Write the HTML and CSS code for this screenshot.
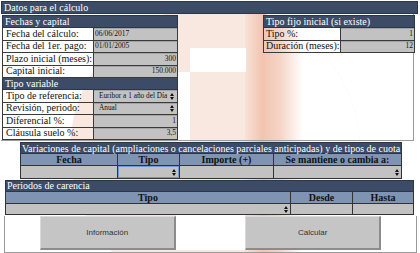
FILE: index.html
```html
<!DOCTYPE html>
<html lang="es">
<head>
<meta charset="utf-8">
<title>Datos para el cálculo</title>
<link rel="stylesheet" href="styles.css">
</head>
<body>
<svg class="watermark" width="420" height="253" viewBox="0 0 420 253" aria-hidden="true">
  <defs>
    <clipPath id="wm-clip"><circle cx="215" cy="150" r="145"/></clipPath>
    <linearGradient id="wm-band" x1="0" x2="1" y1="0" y2="0">
      <stop offset="0" stop-color="#f7e2d8"/>
      <stop offset="0.3" stop-color="#f2c4b0"/>
      <stop offset="0.6" stop-color="#f5d4c6"/>
      <stop offset="1" stop-color="#ffffff"/>
    </linearGradient>
  </defs>
  <g clip-path="url(#wm-clip)">
    <rect x="0" y="0" width="420" height="253" fill="#f8e8e0"/>
    <rect x="245" y="0" width="58" height="253" fill="url(#wm-band)"/>
    <rect x="303" y="0" width="120" height="253" fill="#fff"/>
    <rect x="190" y="48" width="56" height="24" fill="#fff"/>
    <rect x="176" y="72" width="14" height="70" fill="#fff"/>
    <rect x="176" y="213" width="69" height="37" fill="#fff"/>
  </g>
</svg>
<div class="page">
  <div class="title">Datos para el cálculo</div>
  <div class="top">
    <table class="form form-left">
      <colgroup><col class="lcol"><col></colgroup>
      <tr><th colspan="2">Fechas y capital</th></tr>
      <tr><td class="lbl">Fecha del cálculo:</td><td class="val">06/06/2017</td></tr>
      <tr><td class="lbl">Fecha del 1er. pago:</td><td class="val">01/01/2005</td></tr>
      <tr><td class="lbl">Plazo inicial (meses):</td><td class="val num">300</td></tr>
      <tr><td class="lbl">Capital inicial:</td><td class="val num">150.000</td></tr>
      <tr><th colspan="2">Tipo variable</th></tr>
      <tr><td class="lbl">Tipo de referencia:</td><td class="val"><div class="sel"><span>Euribor a 1 año del Día</span><svg class="arr" width="4" height="7" viewBox="0 0 4 7"><path d="M0 3 L2 0 L4 3 Z M0 4 L2 7 L4 4 Z" fill="#111"/></svg></div></td></tr>
      <tr><td class="lbl">Revisión, periodo:</td><td class="val"><div class="sel"><span>Anual</span><svg class="arr" width="4" height="7" viewBox="0 0 4 7"><path d="M0 3 L2 0 L4 3 Z M0 4 L2 7 L4 4 Z" fill="#111"/></svg></div></td></tr>
      <tr><td class="lbl">Diferencial %:</td><td class="val num">1</td></tr>
      <tr><td class="lbl">Cláusula suelo %:</td><td class="val num">3,5</td></tr>
    </table>
    <table class="form form-right">
      <colgroup><col class="lcol"><col></colgroup>
      <tr><th colspan="2">Tipo fijo inicial (si existe)</th></tr>
      <tr><td class="lbl">Tipo %:</td><td class="val num">1</td></tr>
      <tr><td class="lbl">Duración (meses):</td><td class="val num">12</td></tr>
    </table>
  </div>
  <table class="grid variaciones">
    <colgroup><col class="c-fecha"><col class="c-tipo"><col class="c-imp"><col></colgroup>
    <tr><th class="cap" colspan="4">Variaciones de capital (ampliaciones o cancelaciones parciales anticipadas) y de tipos de cuota</th></tr>
    <tr class="cols"><th>Fecha</th><th>Tipo</th><th>Importe (+)</th><th>Se mantiene o cambia a:</th></tr>
    <tr class="inputs">
      <td></td>
      <td><div class="sel focus"><span></span><svg class="arr" width="4" height="7" viewBox="0 0 4 7"><path d="M0 3 L2 0 L4 3 Z M0 4 L2 7 L4 4 Z" fill="#111"/></svg></div></td>
      <td></td>
      <td><div class="sel"><span></span><svg class="arr" width="4" height="7" viewBox="0 0 4 7"><path d="M0 3 L2 0 L4 3 Z M0 4 L2 7 L4 4 Z" fill="#111"/></svg></div></td>
    </tr>
  </table>
  <table class="grid carencia">
    <colgroup><col><col class="c-desde"><col class="c-hasta"></colgroup>
    <tr><th class="cap" colspan="3">Periodos de carencia</th></tr>
    <tr class="cols"><th>Tipo</th><th>Desde</th><th>Hasta</th></tr>
    <tr class="inputs">
      <td><div class="sel"><span></span><svg class="arr" width="4" height="7" viewBox="0 0 4 7"><path d="M0 3 L2 0 L4 3 Z M0 4 L2 7 L4 4 Z" fill="#111"/></svg></div></td>
      <td></td>
      <td></td>
    </tr>
  </table>
  <div class="buttons">
    <div class="btn-cell"><button class="btn" type="button">Información</button></div>
    <div class="btn-cell"><button class="btn" type="button">Calcular</button></div>
  </div>
</div>
</body>
</html>
```

FILE: styles.css
```css
html {
  margin: 0;
  padding: 0;
  background: #fff;
}
body {
  position: relative;
  z-index: 0;
  margin: 0;
  padding: 0;
  width: 420px;
  height: 253px;
  overflow: hidden;
  font-family: "Liberation Serif", "Times New Roman", serif;
  color: #111;
}
.watermark {
  position: absolute;
  left: 0;
  top: 0;
  z-index: -1;
}
.page {
  padding: 1px 0 0 1px;
}
.title {
  box-sizing: border-box;
  width: 417px;
  height: 13px;
  background: #3c4c67;
  border: 1px solid #2c3649;
  color: #fff;
  font-size: 10px;
  line-height: 11px;
  padding-left: 2px;
  white-space: nowrap;
}
.top {
  box-sizing: border-box;
  display: flex;
  align-items: flex-start;
  justify-content: space-between;
  width: 413px;
  height: 127px;
  padding: 1px 0 0 1px;
  border-right: 1px solid #9a9a9a;
  border-bottom: 1px solid #9a9a9a;
}
.form {
  border-collapse: collapse;
  table-layout: fixed;
  font-size: 10px;
}
.form tr {
  height: 12.4px;
}
.form th {
  background: #3c4c67;
  color: #fff;
  font-weight: normal;
  text-align: left;
  padding: 0 0 0 2px;
  border: 1px solid #2c3649;
  line-height: 10px;
  white-space: nowrap;
}
.form td {
  padding: 0;
  border: 1px solid #3a3a3a;
  line-height: 10px;
  white-space: nowrap;
  overflow: hidden;
}
.form .lbl {
  padding-left: 3px;
}
.form-right .lbl {
  padding-left: 2px;
}
.form .val {
  background: #c2c2c2;
  box-shadow: inset 0 1px 0 #a4a4a4;
  font-size: 7.5px;
  padding: 0 1px 0 1px;
}
.form .num {
  text-align: right;
}
.form-left {
  width: 176px;
}
.form-left .lcol {
  width: 91px;
}
.form-right {
  width: 152px;
  margin-right: -2px;
}
.form-right .lcol {
  width: 77px;
}
.sel {
  display: flex;
  align-items: center;
  justify-content: space-between;
  height: 100%;
  padding: 0 2px 0 4px;
  font-size: 7.3px;
  box-sizing: border-box;
}
.sel .arr {
  flex: none;
}
.sel.focus {
  border: 1px solid #6f98d6;
  height: 12px;
}
.grid {
  border-collapse: collapse;
  table-layout: fixed;
}
.grid th, .grid td {
  padding: 0;
  border: 1px solid #333;
}
.grid .cap {
  background: #3c4c67;
  color: #fff;
  font-weight: normal;
  text-align: left;
  font-size: 10px;
  line-height: 9px;
  white-space: nowrap;
  padding-left: 1px;
  border-color: #2c3649;
}
.grid .cols th {
  background: #7f94b2;
  color: #111;
  font-weight: bold;
  font-size: 10px;
  line-height: 10px;
  text-align: center;
  white-space: nowrap;
}
.grid .inputs td {
  background: #c2c2c2;
  padding: 0;
}
.variaciones {
  margin: 1px 0 0 19px;
  width: 382px;
}
.variaciones .cap {
  height: 10px;
}
.variaciones .cols th {
  height: 11px;
}
.variaciones .inputs td {
  height: 12px;
}
.variaciones .c-fecha { width: 97px; }
.variaciones .c-tipo { width: 62px; }
.variaciones .c-imp { width: 94px; }
.carencia {
  margin: 1px 0 0 4px;
  width: 409px;
}
.carencia .cap {
  height: 10px;
  line-height: 10px;
}
.carencia .cols th {
  height: 11px;
}
.carencia .inputs td {
  height: 10px;
}
.carencia .c-desde { width: 62px; }
.carencia .c-hasta { width: 61px; }
.buttons {
  box-sizing: border-box;
  display: grid;
  grid-template-columns: 1fr 1fr;
  width: 413px;
  height: 37px;
  margin: 1px 0 0 3px;
  border-left: 1px solid #9a9a9a;
  border-right: 1px solid #9a9a9a;
  border-bottom: 1px solid #9a9a9a;
}
.btn-cell {
  display: flex;
  justify-content: center;
  align-items: flex-start;
}
.btn {
  box-sizing: border-box;
  width: 136px;
  height: 34px;
  margin: 0;
  padding: 0;
  background: #c5c5c5;
  border-style: solid;
  border-width: 1px 2px 2px 1px;
  border-color: #dadada #8c8c8c #8c8c8c #dadada;
  font-family: "Liberation Sans", Arial, sans-serif;
  font-size: 8px;
  color: #333;
}
```
